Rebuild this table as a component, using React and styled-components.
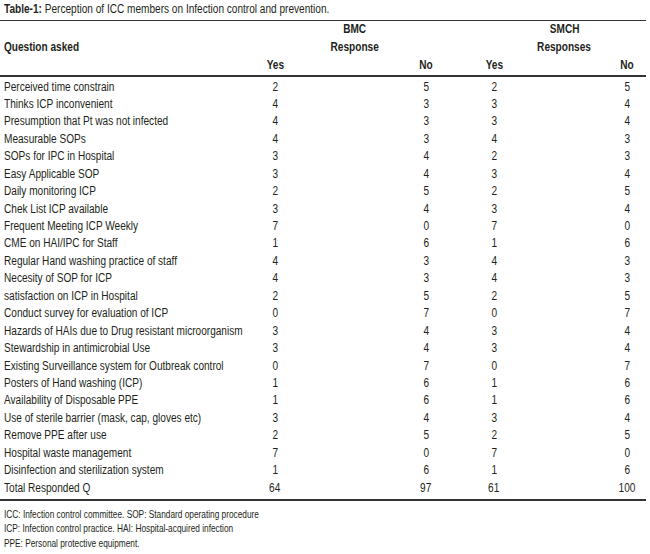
import React from 'react';
import styled, { createGlobalStyle } from 'styled-components';

const GlobalStyle = createGlobalStyle`
  body {
    margin: 0;
    background: #fff;
    color: #231f20;
    font-family: 'Liberation Sans', Arial, sans-serif;
  }
`;

// no condensed face installed, so the text is squeezed to the narrow look of the print
const Narrow = styled.span`
  display: inline-block;
  white-space: nowrap;
  transform: scaleX(${(p) => p.$k || 0.84});
  transform-origin: ${(p) => (p.$center ? 'center' : 'left')} center;
`;

const Page = styled.div`
  width: 646px;
  padding-top: 1px;
`;

const Title = styled.div`
  font-size: 12px;
  line-height: 16px;
  padding-left: 4px;
  margin-bottom: 3px;
`;

const Table = styled.div`
  border-top: 1.5px solid #333;
  border-bottom: 2px solid #333;
`;

const grid = `
  display: grid;
  grid-template-columns: 255px 40px 111px 40px 28px 40px 93px 40px;
`;

const Header = styled.div`
  ${grid}
  grid-template-rows: 18px 18px 18px;
  margin-top: -1.5px;
  padding-bottom: 1px;
  border-bottom: 2px solid #333;
  font-size: 12px;
  font-weight: bold;
  line-height: 18px;
`;

const HeadCell = styled.div`
  grid-row: ${(p) => p.$row};
  grid-column: ${(p) => p.$col};
  text-align: ${(p) => (p.$left ? 'left' : 'center')};
  padding-left: ${(p) => (p.$left ? '4px' : p.$group ? '8px' : '0')};
  white-space: nowrap;
`;

const Body = styled.div`
  padding: 2px 0 2px;
`;

const Row = styled.div`
  ${grid}
  height: 17.45px;
  font-size: 12px;
  line-height: 17.45px;
  & > :nth-child(2) { grid-column: 2; }
  & > :nth-child(3) { grid-column: 4; }
  & > :nth-child(4) { grid-column: 6; }
  & > :nth-child(5) { grid-column: 8; }
`;

const Question = styled.div`
  grid-column: 1 / 2;
  padding-left: 4px;
  white-space: nowrap;
`;

const Num = styled.div`
  text-align: center;
`;

const Notes = styled.div`
  margin-top: 6px;
  padding-left: 4px;
  font-size: 10.5px;
  line-height: 14.3px;
`;

const rows = [
  ['Perceived time constrain', 2, 5, 2, 5],
  ['Thinks ICP inconvenient', 4, 3, 3, 4],
  ['Presumption that Pt was not infected', 4, 3, 3, 4],
  ['Measurable SOPs', 4, 3, 4, 3],
  ['SOPs for IPC in Hospital', 3, 4, 2, 3],
  ['Easy Applicable SOP', 3, 4, 3, 4],
  ['Daily monitoring ICP', 2, 5, 2, 5],
  ['Chek List ICP available', 3, 4, 3, 4],
  ['Frequent Meeting ICP Weekly', 7, 0, 7, 0],
  ['CME on HAI/IPC for Staff', 1, 6, 1, 6],
  ['Regular Hand washing practice of staff', 4, 3, 4, 3],
  ['Necesity of SOP for ICP', 4, 3, 4, 3],
  ['satisfaction on ICP in Hospital', 2, 5, 2, 5],
  ['Conduct survey for evaluation of ICP', 0, 7, 0, 7],
  ['Hazards of HAIs due to Drug resistant microorganism', 3, 4, 3, 4],
  ['Stewardship in antimicrobial Use', 3, 4, 3, 4],
  ['Existing Surveillance system for Outbreak control', 0, 7, 0, 7],
  ['Posters of Hand washing (ICP)', 1, 6, 1, 6],
  ['Availability of Disposable PPE', 1, 6, 1, 6],
  ['Use of sterile barrier (mask, cap, gloves etc)', 3, 4, 3, 4],
  ['Remove PPE after use', 2, 5, 2, 5],
  ['Hospital waste management', 7, 0, 7, 0],
  ['Disinfection and sterilization system', 1, 6, 1, 6],
  ['Total Responded Q', 64, 97, 61, 100],
];

const notes = [
  'ICC: Infection control committee. SOP: Standard operating procedure',
  'ICP: Infection control practice. HAI: Hospital-acquired infection',
  'PPE: Personal protective equipment.',
];

export default function App() {
  return (
    <Page>
      <GlobalStyle />
      <Title>
        <Narrow>
          <b>Table-1:</b> Perception of ICC members on Infection control and prevention.
        </Narrow>
      </Title>
      <Table>
        <Header>
          <HeadCell $row={1} $col="2 / 5" $group><Narrow $center>BMC</Narrow></HeadCell>
          <HeadCell $row={1} $col="6 / 9" $group><Narrow $center>SMCH</Narrow></HeadCell>
          <HeadCell $row={2} $col="1 / 2" $left><Narrow>Question asked</Narrow></HeadCell>
          <HeadCell $row={2} $col="2 / 5" $group><Narrow $center>Response</Narrow></HeadCell>
          <HeadCell $row={2} $col="6 / 9" $group><Narrow $center>Responses</Narrow></HeadCell>
          <HeadCell $row={3} $col="2"><Narrow $center>Yes</Narrow></HeadCell>
          <HeadCell $row={3} $col="4"><Narrow $center>No</Narrow></HeadCell>
          <HeadCell $row={3} $col="6"><Narrow $center>Yes</Narrow></HeadCell>
          <HeadCell $row={3} $col="8"><Narrow $center>No</Narrow></HeadCell>
        </Header>
        <Body>
          {rows.map(([q, ...vals]) => (
            <Row key={q}>
              <Question><Narrow>{q}</Narrow></Question>
              {vals.map((v, i) => (
                <Num key={i}><Narrow $center>{v}</Narrow></Num>
              ))}
            </Row>
          ))}
        </Body>
      </Table>
      <Notes>
        {notes.map((n) => (
          <div key={n}><Narrow $k={0.79}>{n}</Narrow></div>
        ))}
      </Notes>
    </Page>
  );
}
